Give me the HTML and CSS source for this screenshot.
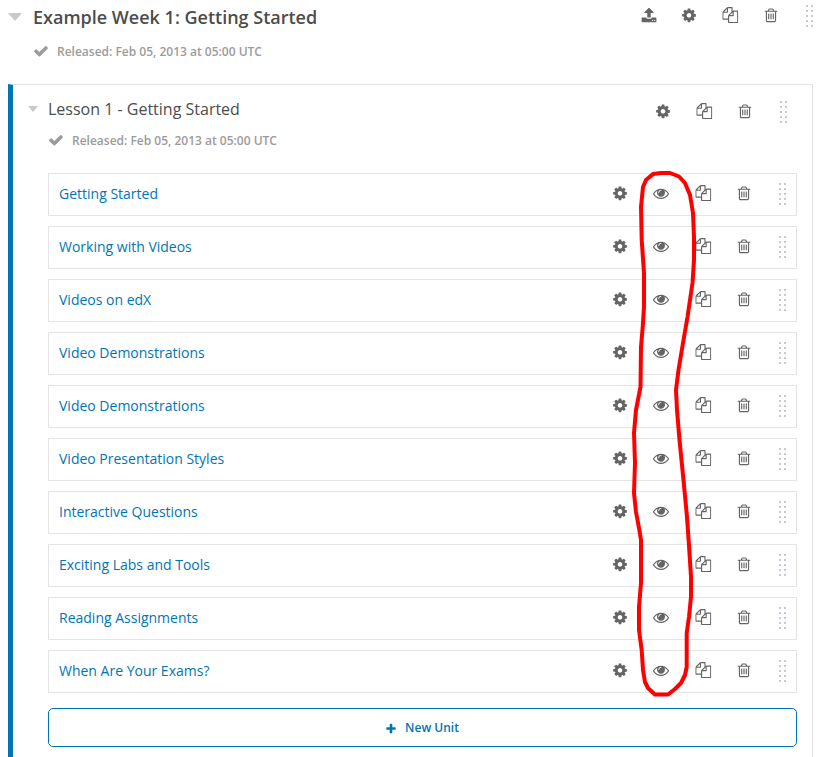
FILE: index.html
```html
<!DOCTYPE html>
<html lang="en">
<head>
<meta charset="utf-8">
<title>Course Outline</title>
<link rel="stylesheet" href="styles.css">
</head>
<body>
<svg class="sprite" aria-hidden="true">
<symbol id="gear" viewBox="0 0 1792 1792"><path d="M1152 896q0-106-75-181t-181-75-181 75-75 181 75 181 181 75 181-75 75-181zm512-109v222q0 12-8 23t-20 13l-185 28q-19 54-39 91 35 50 107 138 10 12 10 25t-9 23q-27 37-99 108t-94 71q-12 0-26-9l-138-108q-44 23-91 38-16 136-29 186-7 28-36 28h-222q-14 0-24.500-8.500t-11.500-21.500l-28-184q-49-16-90-37l-141 107q-10 9-25 9-14 0-25-11-126-114-165-168-7-10-7-23 0-12 8-23 15-21 51-66.500t54-70.500q-27-50-41-99l-183-27q-13-2-21-12.500t-8-23.500v-222q0-12 8-23t19-13l186-28q14-46 39-92-40-57-107-138-10-12-10-24 0-10 9-23 26-36 98.500-107.500t94.500-71.500q13 0 26 10l138 107q44-23 91-38 16-136 29-186 7-28 36-28h222q14 0 24.500 8.500t11.500 21.500l28 184q49 16 90 37l142-107q9-9 24-9 13 0 25 10 129 119 165 170 7 8 7 22 0 12-8 23-15 21-51 66.500t-54 70.500q26 50 41 98l183 28q13 2 21 12.500t8 23.500z"/></symbol>
<symbol id="eye" viewBox="0 0 1792 1792"><path d="M1664 960q-152-236-381-353 61 104 61 225 0 185-131.500 316.500t-316.500 131.500-316.500-131.500-131.500-316.500q0-121 61-225-229 117-381 353 133 205 333.500 326.500t434.500 121.500 434.500-121.500 333.500-326.500zm-720-384q0-20-14-34t-34-14q-125 0-214.500 89.500t-89.500 214.500q0 20 14 34t34 14 34-14 14-34q0-86 61-147t147-61q20 0 34-14t14-34zm848 384q0 34-20 69-140 230-376.500 368.500t-499.500 138.500-499.500-139-376.500-368q-20-35-20-69t20-69q140-229 376.500-368t499.500-139 499.500 139 376.500 368q20 35 20 69z"/></symbol>
<symbol id="copy" viewBox="0 0 1792 1792"><path d="M1696 384q40 0 68 28t28 68v1216q0 40-28 68t-68 28h-960q-40 0-68-28t-28-68v-288h-544q-40 0-68-28t-28-68v-672q0-40 20-88t48-76l408-408q28-28 76-48t88-20h416q40 0 68 28t28 68v328q68-40 128-40h416zm-544 213l-299 299h299v-299zm-640-384l-299 299h299v-299zm196 647l316-316v-416h-384v416q0 40-28 68t-68 28h-416v640h512v-256q0-40 20-88t48-76zm956 804v-1152h-384v416q0 40-28 68t-68 28h-416v640h896z"/></symbol>
<symbol id="trash" viewBox="0 0 1792 1792"><path d="M704 736v576q0 14-9 23t-23 9h-64q-14 0-23-9t-9-23v-576q0-14 9-23t23-9h64q14 0 23 9t9 23zm256 0v576q0 14-9 23t-23 9h-64q-14 0-23-9t-9-23v-576q0-14 9-23t23-9h64q14 0 23 9t9 23zm256 0v576q0 14-9 23t-23 9h-64q-14 0-23-9t-9-23v-576q0-14 9-23t23-9h64q14 0 23 9t9 23zm128 724v-948h-896v948q0 22 7 40.500t14.500 27 10.500 8.500h832q3 0 10.500-8.500t14.500-27 7-40.500zm-672-1076h448l-48-117q-7-9-17-11h-317q-10 2-17 11zm928 32v64q0 14-9 23t-23 9h-96v948q0 83-47 143.500t-113 60.500h-832q-66 0-113-58.500t-47-141.500v-952h-96q-14 0-23-9t-9-23v-64q0-14 9-23t23-9h309l70-167q15-37 54-63t79-26h320q40 0 79 26t54 63l70 167h309q14 0 23 9t9 23z"/></symbol>
<symbol id="upload" viewBox="0 0 1792 1792"><path d="M1344 1472q0-26-19-45t-45-19-45 19-19 45 19 45 45 19 45-19 19-45zm256 0q0-26-19-45t-45-19-45 19-19 45 19 45 45 19 45-19 19-45zm128-224v320q0 40-28 68t-68 28h-1472q-40 0-68-28t-28-68v-320q0-40 28-68t68-28h427q21 56 70.500 92t110.500 36h256q61 0 110.500-36t70.500-92h427q40 0 68 28t28 68zm-325-648q-17 40-59 40h-256v448q0 26-19 45t-45 19h-256q-26 0-45-19t-19-45v-448h-256q-42 0-59-40-17-39 14-69l448-448q18-19 45-19t45 19l448 448q31 30 14 69z"/></symbol>
<symbol id="check" viewBox="0 0 1792 1792"><path d="M1671 566q0 40-28 68l-724 724-136 136q-28 28-68 28t-68-28l-136-136-362-362q-28-28-28-68t28-68l136-136q28-28 68-28t68 28l294 295 656-657q28-28 68-28t68 28l136 136q28 28 28 68z"/></symbol>
<symbol id="plus" viewBox="0 0 1792 1792"><path d="M1600 736v192q0 40-28 68t-68 28h-416v416q0 40-28 68t-68 28h-192q-40 0-68-28t-28-68v-416h-416q-40 0-68-28t-28-68v-192q0-40 28-68t68-28h416v-416q0-40 28-68t68-28h192q40 0 68 28t28 68v416h416q40 0 68 28t28 68z"/></symbol>
<symbol id="grip" viewBox="0 0 7 22"><path d="M0 0h2v2H0zM5 0h2v2H5zM0 5h2v2H0zM5 5h2v2H5zM0 10h2v2H0zM5 10h2v2H5zM0 15h2v2H0zM5 15h2v2H5zM0 20h2v2H0zM5 20h2v2H5z"/></symbol>
</svg>
<main class="outline">
<header class="section-head">
<span class="caret"></span>
<h1 class="section-title">Example Week 1: Getting Started</h1>
<div class="actions"><svg class="icon"><use href="#upload"/></svg><svg class="icon"><use href="#gear"/></svg><svg class="icon"><use href="#copy"/></svg><svg class="icon"><use href="#trash"/></svg><svg class="grip"><use href="#grip"/></svg></div>
</header>
<p class="release section-release"><svg class="icon"><use href="#check"/></svg>Released: Feb 05, 2013 at 05:00 UTC</p>
<section class="lesson">
<header class="lesson-head">
<span class="caret caret-small"></span>
<h2 class="lesson-title">Lesson 1 - Getting Started</h2>
<div class="actions"><svg class="icon"><use href="#gear"/></svg><svg class="icon"><use href="#copy"/></svg><svg class="icon"><use href="#trash"/></svg><svg class="grip"><use href="#grip"/></svg></div>
</header>
<p class="release lesson-release"><svg class="icon"><use href="#check"/></svg>Released: Feb 05, 2013 at 05:00 UTC</p>
<ul class="units">
<li class="unit"><a class="unit-name">Getting Started</a><div class="actions"><svg class="icon"><use href="#gear"/></svg><svg class="icon"><use href="#eye"/></svg><svg class="icon"><use href="#copy"/></svg><svg class="icon"><use href="#trash"/></svg><svg class="grip"><use href="#grip"/></svg></div></li>
<li class="unit"><a class="unit-name">Working with Videos</a><div class="actions"><svg class="icon"><use href="#gear"/></svg><svg class="icon"><use href="#eye"/></svg><svg class="icon"><use href="#copy"/></svg><svg class="icon"><use href="#trash"/></svg><svg class="grip"><use href="#grip"/></svg></div></li>
<li class="unit"><a class="unit-name">Videos on edX</a><div class="actions"><svg class="icon"><use href="#gear"/></svg><svg class="icon"><use href="#eye"/></svg><svg class="icon"><use href="#copy"/></svg><svg class="icon"><use href="#trash"/></svg><svg class="grip"><use href="#grip"/></svg></div></li>
<li class="unit"><a class="unit-name">Video Demonstrations</a><div class="actions"><svg class="icon"><use href="#gear"/></svg><svg class="icon"><use href="#eye"/></svg><svg class="icon"><use href="#copy"/></svg><svg class="icon"><use href="#trash"/></svg><svg class="grip"><use href="#grip"/></svg></div></li>
<li class="unit"><a class="unit-name">Video Demonstrations</a><div class="actions"><svg class="icon"><use href="#gear"/></svg><svg class="icon"><use href="#eye"/></svg><svg class="icon"><use href="#copy"/></svg><svg class="icon"><use href="#trash"/></svg><svg class="grip"><use href="#grip"/></svg></div></li>
<li class="unit"><a class="unit-name">Video Presentation Styles</a><div class="actions"><svg class="icon"><use href="#gear"/></svg><svg class="icon"><use href="#eye"/></svg><svg class="icon"><use href="#copy"/></svg><svg class="icon"><use href="#trash"/></svg><svg class="grip"><use href="#grip"/></svg></div></li>
<li class="unit"><a class="unit-name">Interactive Questions</a><div class="actions"><svg class="icon"><use href="#gear"/></svg><svg class="icon"><use href="#eye"/></svg><svg class="icon"><use href="#copy"/></svg><svg class="icon"><use href="#trash"/></svg><svg class="grip"><use href="#grip"/></svg></div></li>
<li class="unit"><a class="unit-name">Exciting Labs and Tools</a><div class="actions"><svg class="icon"><use href="#gear"/></svg><svg class="icon"><use href="#eye"/></svg><svg class="icon"><use href="#copy"/></svg><svg class="icon"><use href="#trash"/></svg><svg class="grip"><use href="#grip"/></svg></div></li>
<li class="unit"><a class="unit-name">Reading Assignments</a><div class="actions"><svg class="icon"><use href="#gear"/></svg><svg class="icon"><use href="#eye"/></svg><svg class="icon"><use href="#copy"/></svg><svg class="icon"><use href="#trash"/></svg><svg class="grip"><use href="#grip"/></svg></div></li>
<li class="unit"><a class="unit-name">When Are Your Exams?</a><div class="actions"><svg class="icon"><use href="#gear"/></svg><svg class="icon"><use href="#eye"/></svg><svg class="icon"><use href="#copy"/></svg><svg class="icon"><use href="#trash"/></svg><svg class="grip"><use href="#grip"/></svg></div></li>
</ul>
<button class="new-unit"><svg class="plus"><use href="#plus"/></svg>New Unit</button>
</section>
</main>
<svg class="annotation" viewBox="0 0 824 757"><path d="M661 173L670 173 679 176.500 685 183 690 195 693 213 694 237 694 260 692.500 283 687.500 317 683 343 678.500 370 676 390 677 410 679.500 440 683.500 480 687 517 689.500 553 691 577 691 597 689 617 686.700 633 686.700 667 685 675 681 683 675 689 668 694.500 655 694.500 648 688 645 682 643 670 641.700 650 639 630 639 607 641 583 641 540 639 528 636 512 634 493 635 463 634 433 636 410 640.500 387 641 347 642.700 327 644 307 644 273 641.700 240 641 207 643 187 646 180 653 174Z"/></svg>
</body>
</html>
```
FILE: styles.css
```css
* { box-sizing: border-box; }
body {
  margin: 0;
  height: 757px;
  overflow: hidden;
  background: #fff;
  font-family: "Open Sans", sans-serif;
  color: #4c4c4c;
}
.sprite { display: none; }
h1, h2, p, ul { margin: 0; padding: 0; }
svg { display: block; fill: currentColor; flex: none; }
.outline { height: 757px; padding-left: 8px; }
.section-head { display: flex; height: 30px; }
.caret {
  width: 14px;
  height: 8px;
  margin: 13px 11px 0 0;
  background: #c9c9c9;
  clip-path: polygon(0 0, 100% 0, 50% 100%);
}
.section-title { font-size: 18px; line-height: 34px; font-weight: 600; }
.actions { display: flex; margin-left: auto; color: #646464; }
.icon { width: 16px; height: 16px; overflow: visible; }
.actions use { transform: translateY(0.3px); }
.actions use[href="#grip"] { transform: none; }
.actions use[href="#copy"] { transform: translate(0.3px, 0.1px); }
.grip { width: 7px; height: 22px; color: #c5cad4; }
.section-head .actions { padding: 7px 11px 0 0; }
.section-head .icon { margin-right: 25px; }
.section-head .icon:first-child { margin-right: 24px; }
.section-head .icon:nth-child(4) { margin-right: 27px; }
.section-head .grip { margin-top: -2px; }
.release {
  display: flex;
  align-items: center;
  height: 20px;
  font-size: 12px;
  font-weight: 600;
  color: #9b9b9b;
}
.release .icon { margin-right: 8px; }
.section-release { margin: 11px 0 0 25px; }
.lesson {
  width: 805px;
  height: 690px;
  margin-top: 23px;
  padding-right: 15px;
  border: solid #e4e4e4;
  border-width: 1px 1px 0 5px;
  border-left-color: #0075b4;
}
.lesson-head { display: flex; height: 45px; }
.caret-small { width: 10px; height: 6px; margin: 21px 10px 0 15px; }
.lesson-title { font-size: 16px; line-height: 48px; font-weight: 400; }
.lesson-head .actions { padding: 18px 10px 0 0; }
.lesson-head .icon { margin-right: 25px; }
.lesson-head .icon:nth-child(3) { margin-right: 27px; }
.lesson-head .grip { margin-top: -2px; }
.lesson-release { margin-left: 35px; }
.units { display: grid; gap: 10px; margin: 23px 0 0 35px; list-style: none; }
.unit {
  display: flex;
  height: 43px;
  padding-left: 10px;
  border: 1px solid #e4e4e4;
}
.unit-name { font-size: 14px; line-height: 39px; color: #0075b4; }
.unit .actions { padding: 11px 10px 0 0; }
.unit .icon { margin-right: 25px; }
.unit .icon:nth-child(2) { margin-right: 26px; }
.unit .icon:nth-child(4) { margin-right: 27px; }
.unit .grip { margin-top: -2px; }
.new-unit {
  display: flex;
  align-items: center;
  justify-content: center;
  width: 749px;
  height: 39px;
  margin: 15px 0 0 35px;
  padding: 0 1px 0 0;
  border: 1px solid #0075b4;
  border-radius: 5px;
  background: #fff;
  color: #0075b4;
  font: 600 12px "Open Sans", sans-serif;
}
.plus { width: 12px; height: 12px; margin: 2px 8px 0 0; }
.annotation { position: absolute; inset: 0; width: 824px; height: 757px; }
.annotation path { fill: none; stroke: #f00; stroke-width: 4; stroke-linejoin: round; }
```
